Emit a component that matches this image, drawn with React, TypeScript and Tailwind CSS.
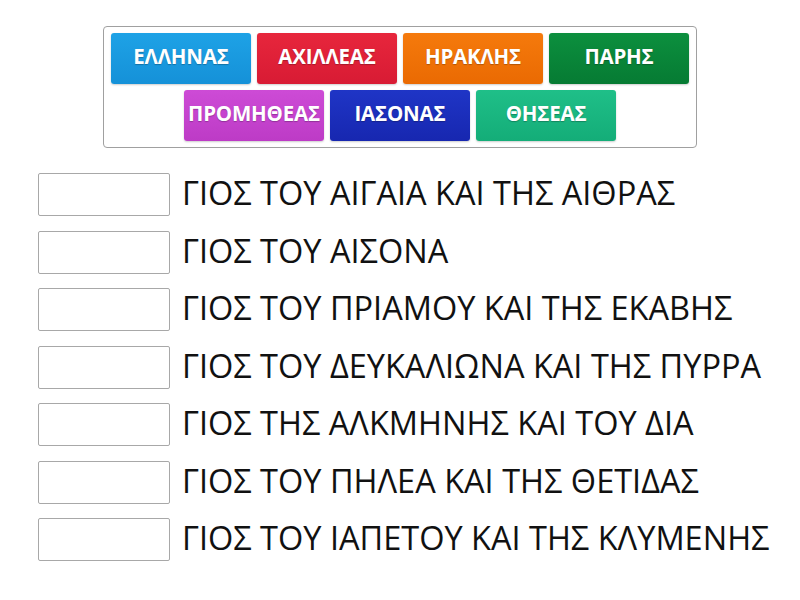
const answers = [
  { label: "ΕΛΛΗΝΑΣ", color: "bg-[linear-gradient(#1ea2e6,#1591d8)]" },
  { label: "ΑΧΙΛΛΕΑΣ", color: "bg-[linear-gradient(#e7263c,#d81b34)]" },
  { label: "ΗΡΑΚΛΗΣ", color: "bg-[linear-gradient(#f57a0c,#ea6a02)]" },
  { label: "ΠΑΡΗΣ", color: "bg-[linear-gradient(#0c8f3e,#067b33)]" },
  { label: "ΠΡΟΜΗΘΕΑΣ", color: "bg-[linear-gradient(#cd4bd6,#bd3bc6)]" },
  { label: "ΙΑΣΟΝΑΣ", color: "bg-[linear-gradient(#1f35c6,#1727b0)]" },
  { label: "ΘΗΣΕΑΣ", color: "bg-[linear-gradient(#1fbf88,#14ad78)]" },
];

const clues = [
  "ΓΙΟΣ ΤΟΥ ΑΙΓΑΙΑ ΚΑΙ ΤΗΣ ΑΙΘΡΑΣ",
  "ΓΙΟΣ ΤΟΥ ΑΙΣΟΝΑ",
  "ΓΙΟΣ ΤΟΥ ΠΡΙΑΜΟΥ ΚΑΙ ΤΗΣ ΕΚΑΒΗΣ",
  "ΓΙΟΣ ΤΟΥ ΔΕΥΚΑΛΙΩΝΑ ΚΑΙ ΤΗΣ ΠΥΡΡΑ",
  "ΓΙΟΣ ΤΗΣ ΑΛΚΜΗΝΗΣ ΚΑΙ ΤΟΥ ΔΙΑ",
  "ΓΙΟΣ ΤΟΥ ΠΗΛΕΑ ΚΑΙ ΤΗΣ ΘΕΤΙΔΑΣ",
  "ΓΙΟΣ ΤΟΥ ΙΑΠΕΤΟΥ ΚΑΙ ΤΗΣ ΚΛΥΜΕΝΗΣ",
];

export default function App() {
  return (
    <div className="w-[800px] h-[600px] bg-white font-['Open_Sans',sans-serif] pt-[26px]">
      {/* bank of answers */}
      <div className="mx-auto w-[594px] border border-[#a0a0a0] rounded-[4px] px-[7px] py-[6px] flex flex-wrap justify-center gap-[6px]">
        {answers.map((a) => (
          <div
            key={a.label}
            className={`w-[140px] h-[51px] rounded-[3px] ${a.color} flex items-center justify-center pb-[4px] text-white font-bold text-[20.5px] tracking-[-0.2px] whitespace-nowrap [text-shadow:0_1px_1px_rgba(0,0,0,0.25)] shadow-[0_1px_2px_rgba(0,0,0,0.2)]`}
          >
            {a.label}
          </div>
        ))}
      </div>

      {/* clues */}
      <div className="mt-[25px] pl-[38px] flex flex-col gap-[14.5px]">
        {clues.map((c) => (
          <div key={c} className="flex items-center h-[43px]">
            <div className="w-[132px] h-[43px] border border-[#a8a8a8] rounded-[2px] bg-white shrink-0" />
            <span className="ml-[12px] pb-[2px] text-[32.5px] text-[#111] leading-none whitespace-nowrap">{c}</span>
          </div>
        ))}
      </div>
    </div>
  );
}
